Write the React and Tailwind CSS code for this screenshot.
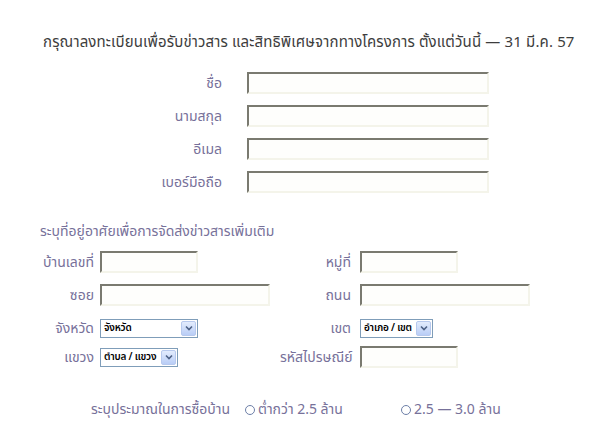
import React from 'react';

const font = { fontFamily: '"Noto Sans Thai", Tahoma, "Noto Sans", "DejaVu Sans", sans-serif' };

function TextBox({ w }) {
  return (
    <div
      className={`h-[22px] ${w} bg-[#fefefc] border-2 border-t-[#7a7a70] border-l-[#7a7a70] border-b-[#f4f4ea] border-r-[#f4f4ea]`}
    />
  );
}

function Select({ w, text }) {
  return (
    <div className={`h-[19px] ${w} flex items-center justify-between gap-[2px] bg-white border border-[#7f9db9] pl-[3px] pr-[1px] overflow-hidden`}>
      <span className="text-[10px] font-semibold text-black leading-none whitespace-nowrap tracking-[-0.2px]">{text}</span>
      <span className="w-[15px] h-[15px] shrink-0 flex items-center justify-center rounded-[2px] border border-[#b7c9ee] bg-gradient-to-b from-[#e3ecfd] to-[#b9cdf6]">
        <svg width="8" height="6" viewBox="0 0 8 6">
          <path d="M1 1.5 L4 4.5 L7 1.5" fill="none" stroke="#4d6185" strokeWidth="1.6" />
        </svg>
      </span>
    </div>
  );
}

function Radio() {
  return <span className="inline-block w-[10px] h-[10px] rounded-full border border-[#6d7fa8] bg-white" />;
}

function Label({ w, children }) {
  return <div className={`${w} text-right whitespace-nowrap`}>{children}</div>;
}

export default function App() {
  const topFields = ['ชื่อ', 'นามสกุล', 'อีเมล', 'เบอร์มือถือ'];
  return (
    <div className="w-[600px] h-[430px] bg-white text-[14px] text-[#77719a] overflow-hidden" style={font}>
      <div className="pt-[32px] pl-[43px] text-[15px] text-[#3d3d3d] leading-[22px] whitespace-nowrap tracking-[0.15px]">
        กรุณาลงทะเบียนเพื่อรับข่าวสาร และสิทธิพิเศษจากทางโครงการ ตั้งแต่วันนี้ — 31 มี.ค. 57
      </div>

      <div className="mt-[18px] flex flex-col gap-[11px]">
        {topFields.map((f) => (
          <div key={f} className="flex items-center">
            <Label w="w-[222px]">{f}</Label>
            <div className="ml-[25px]">
              <TextBox w="w-[242px]" />
            </div>
          </div>
        ))}
      </div>

      <div className="mt-[29px] pl-[40px] leading-[20px]">ระบุที่อยู่อาศัยเพื่อการจัดส่งข่าวสารเพิ่มเติม</div>

      <div className="mt-[9px] flex flex-col">
        <div className="flex items-center h-[22px]">
          <div className="w-[280px] flex items-center">
            <Label w="w-[94px]">บ้านเลขที่</Label>
            <div className="ml-[6px]"><TextBox w="w-[98px]" /></div>
          </div>
          <div className="flex items-center">
            <Label w="w-[71px]">หมู่ที่</Label>
            <div className="ml-[9px]"><TextBox w="w-[98px]" /></div>
          </div>
        </div>

        <div className="flex items-center h-[22px] mt-[11px]">
          <div className="w-[280px] flex items-center">
            <Label w="w-[94px]">ซอย</Label>
            <div className="ml-[6px]"><TextBox w="w-[170px]" /></div>
          </div>
          <div className="flex items-center">
            <Label w="w-[71px]">ถนน</Label>
            <div className="ml-[9px]"><TextBox w="w-[170px]" /></div>
          </div>
        </div>

        <div className="flex items-center h-[22px] mt-[11px]">
          <div className="w-[280px] flex items-center">
            <Label w="w-[94px]">จังหวัด</Label>
            <div className="ml-[6px]"><Select w="w-[98px]" text="จังหวัด" /></div>
          </div>
          <div className="flex items-center">
            <Label w="w-[71px]">เขต</Label>
            <div className="ml-[9px]"><Select w="w-[73px]" text="อำเภอ / เขต" /></div>
          </div>
        </div>

        <div className="flex items-center h-[22px] mt-[7px]">
          <div className="w-[280px] flex items-center">
            <Label w="w-[94px]">แขวง</Label>
            <div className="ml-[6px]"><Select w="w-[78px]" text="ตำบล / แขวง" /></div>
          </div>
          <div className="flex items-center">
            <Label w="w-[71px]">รหัสไปรษณีย์</Label>
            <div className="ml-[9px]"><TextBox w="w-[98px]" /></div>
          </div>
        </div>
      </div>

      <div className="mt-[31px] flex items-center">
        <Label w="w-[230px]">ระบุประมาณในการซื้อบ้าน</Label>
        <div className="ml-[15px] flex items-center gap-[3px] w-[156px]">
          <Radio />
          <span>ต่ำกว่า 2.5 ล้าน</span>
        </div>
        <div className="flex items-center gap-[3px]">
          <Radio />
          <span>2.5 — 3.0 ล้าน</span>
        </div>
      </div>
    </div>
  );
}
